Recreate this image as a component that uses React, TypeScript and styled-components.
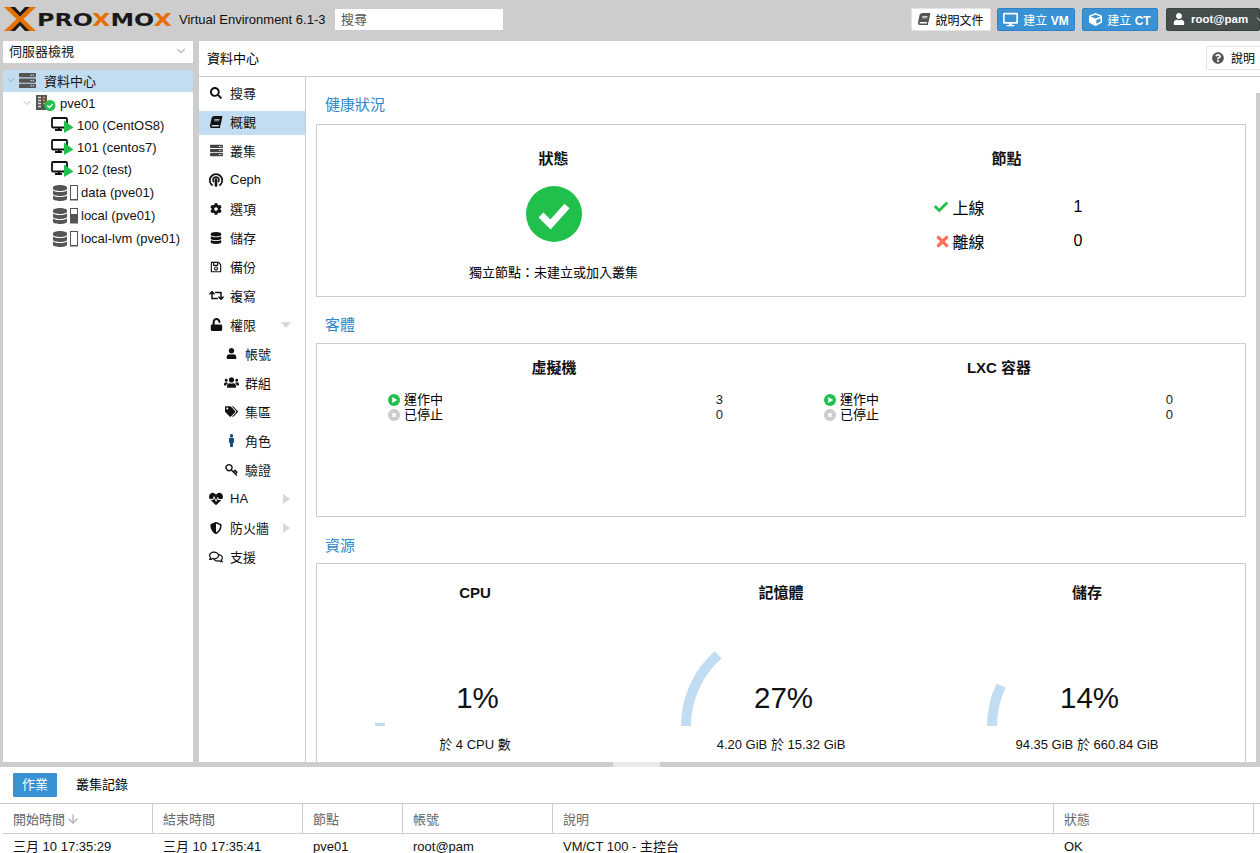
import React from 'react';
import styled, { createGlobalStyle } from 'styled-components';
import {
  FaBook,
  FaCheck,
  FaCog,
  FaCube,
  FaDatabase,
  FaDesktop,
  FaHeartbeat,
  FaMale,
  FaQuestionCircle,
  FaRegComments,
  FaRegSave,
  FaRetweet,
  FaSearch,
  FaServer,
  FaShieldAlt,
  FaTags,
  FaTimes,
  FaUnlock,
  FaUser,
  FaUsers,
} from 'react-icons/fa';
import { FiArrowDown, FiChevronDown, FiKey } from 'react-icons/fi';

const GlobalStyle = createGlobalStyle`
  html, body {
    margin: 0;
    padding: 0;
    background: #cdcdcd;
  }
  body {
    font-family: "Liberation Sans", "Noto Sans CJK TC", sans-serif;
    font-size: 13px;
    color: #000;
  }
`;

const Page = styled.div`
  width: 1260px;
  height: 853px;
  display: flex;
  flex-direction: column;
  overflow: hidden;
  background: #cdcdcd;
`;

const TopBar = styled.header`
  height: 41px;
  flex: none;
  display: flex;
  align-items: center;
  padding: 0 0 3px 4px;
  box-sizing: border-box;
`;

const Logo = styled.div`
  display: flex;
  align-items: center;
  width: 175px;
  flex: none;
`;

const LogoText = styled.span`
  font-family: "DejaVu Sans", sans-serif;
  font-weight: 700;
  font-size: 18px;
  color: #1a1a1a;
  margin-left: 1px;
  white-space: nowrap;
  transform: scaleX(1.32);
  transform-origin: left center;
`;

const LogoX = styled.span`
  color: #e57000;
`;

const Version = styled.span`
  color: #111;
  white-space: nowrap;
  width: 156px;
  flex: none;
`;

const SearchInput = styled.input`
  width: 168px;
  height: 21px;
  border: 0;
  padding: 0 6px;
  box-sizing: border-box;
  font: inherit;
  background: #fff;
  &::placeholder {
    color: #555;
  }
`;

const TopActions = styled.div`
  margin-left: auto;
  display: flex;
  align-items: center;
  gap: 6px;
`;

const TopButton = styled.button<{ $tone: 'plain' | 'blue' | 'dark'; $width: number; $offset?: number }>`
  width: ${(p) => p.$width}px;
  height: 23px;
  margin-left: ${(p) => p.$offset ?? 0}px;
  display: flex;
  align-items: center;
  justify-content: ${(p) => (p.$tone === 'dark' ? 'flex-start' : 'center')};
  gap: ${(p) => (p.$tone === 'dark' ? 6 : 5)}px;
  padding: ${(p) => (p.$tone === 'dark' ? '0 0 0 6px' : '0')};
  border-radius: 2px;
  font: inherit;
  font-size: 12px;
  white-space: nowrap;
  border: 1px solid
    ${(p) => (p.$tone === 'blue' ? '#2f82c4' : p.$tone === 'dark' ? '#3c4242' : '#e4e4e4')};
  background: ${(p) => (p.$tone === 'blue' ? '#3892d4' : p.$tone === 'dark' ? '#464d4d' : '#fff')};
  color: ${(p) => (p.$tone === 'plain' ? '#000' : '#fff')};
  svg {
    flex: none;
  }
`;

const ButtonStrong = styled.b`
  font-weight: 700;
`;

const UserName = styled.span`
  font-size: 11.5px;
  font-weight: 700;
`;

const PlainIcon = styled.span`
  color: #555;
  display: flex;
`;

const Main = styled.div`
  height: 721px;
  flex: none;
  display: flex;
  gap: 6px;
  padding-left: 3px;
`;

const LeftColumn = styled.aside`
  width: 190px;
  flex: none;
  display: flex;
  flex-direction: column;
  gap: 7px;
`;

const ViewSelect = styled.div`
  height: 22px;
  flex: none;
  box-sizing: border-box;
  background: #fff;
  display: flex;
  align-items: center;
  justify-content: space-between;
  padding: 0 5px 3px 6px;
  color: #111;
  svg {
    color: #bbb;
  }
`;

const Tree = styled.div`
  flex: 1;
  background: #fff;
`;

const TreeRow = styled.div<{ $depth: number; $selected?: boolean; $tall?: boolean }>`
  height: ${(p) => (p.$tall ? 23 : 22)}px;
  box-sizing: border-box;
  padding-top: ${(p) => (p.$tall ? 2 : 0)}px;
  padding-bottom: ${(p) => (p.$selected ? 2 : 0)}px;
  display: flex;
  align-items: center;
  padding-left: ${(p) => p.$depth}px;
  background: ${(p) => (p.$selected ? '#c2ddf2' : 'transparent')};
  white-space: nowrap;
  color: #111;
`;

const Twist = styled.span<{ $selected?: boolean }>`
  width: 14px;
  flex: none;
  display: flex;
  color: ${(p) => (p.$selected ? '#9aa' : '#bbb')};
`;

const TreeIcon = styled.span`
  display: flex;
  align-items: center;
  margin-right: 2px;
  flex: none;
`;

const StorageGlyph = styled.span`
  display: flex;
  align-items: center;
  gap: 2px;
`;

const DatacenterLabel = styled.span`
  margin-left: 6px;
`;

const Workspace = styled.main`
  flex: 1;
  min-width: 0;
  display: flex;
  flex-direction: column;
  background: #fff;
`;

const WorkspaceHeader = styled.div`
  height: 36px;
  flex: none;
  box-sizing: border-box;
  border-bottom: 1px solid #cdcdcd;
  display: flex;
  align-items: center;
  justify-content: space-between;
  padding: 0 0 2px 8px;
`;

const HelpButton = styled.button`
  width: 54px;
  height: 24px;
  padding: 0 0 0 5px;
  display: flex;
  align-items: center;
  gap: 7px;
  font: inherit;
  font-size: 12px;
  color: #000;
  background: #fff;
  border: 1px solid #e4e4e4;
  border-right: 0;
  border-radius: 2px 0 0 2px;
  svg {
    color: #555;
  }
`;

const WorkspaceBody = styled.div`
  flex: 1;
  min-height: 0;
  display: flex;
`;

const Nav = styled.nav`
  width: 107px;
  flex: none;
  box-sizing: border-box;
  border-right: 1px solid #cdcdcd;
  padding-top: 5px;
`;

const NavItem = styled.div<{ $selected?: boolean; $sub?: boolean }>`
  height: 24px;
  box-sizing: border-box;
  margin-bottom: 5px;
  display: flex;
  align-items: center;
  padding: 0 0 3px ${(p) => (p.$sub ? 24 : 9)}px;
  background: ${(p) => (p.$selected ? '#c2ddf2' : 'transparent')};
  white-space: nowrap;
  color: #111;
`;

const NavIcon = styled.span`
  width: 16px;
  flex: none;
  display: flex;
  justify-content: center;
  margin-right: 6px;
  color: #111;
`;

const NavArrow = styled.span<{ $open?: boolean }>`
  margin-left: auto;
  margin-right: ${(p) => (p.$open ? 14 : 15)}px;
  width: 0;
  height: 0;
  border-style: solid;
  ${(p) =>
    p.$open
      ? 'border-width: 6px 5px 0 5px; border-color: #d8d8d8 transparent transparent transparent;'
      : 'border-width: 5px 0 5px 7px; border-color: transparent transparent transparent #d8d8d8;'}
`;

const Content = styled.div`
  flex: 1;
  min-width: 0;
  overflow: hidden;
  padding: 0 10px;
`;

const SectionTitle = styled.h2<{ $top: number }>`
  margin: 0;
  height: 47px;
  box-sizing: border-box;
  padding: ${(p) => p.$top}px 0 0 9px;
  font-size: 15px;
  line-height: 18px;
  font-weight: 400;
  color: #2f86c7;
`;

const Panel = styled.section<{ $height: number }>`
  height: ${(p) => p.$height}px;
  box-sizing: border-box;
  border: 1px solid #cdcdcd;
  padding: 0 10px;
  margin-bottom: -1px;
`;

const HealthGrid = styled.div`
  display: grid;
  grid-template-columns: 453px 453px;
`;

const GuestGrid = styled.div`
  display: grid;
  grid-template-columns: 454px 436px;
`;

const Cell = styled.div`
  text-align: center;
`;

const PanelHeading = styled.h3<{ $top: number }>`
  margin: 0;
  padding-top: ${(p) => p.$top}px;
  font-size: 15px;
  line-height: 18px;
  font-weight: 700;
  text-align: center;
  color: #111;
`;

const StatusBadge = styled.div`
  display: flex;
  justify-content: center;
  margin-top: 18px;
`;

const StatusText = styled.div`
  margin-top: 22px;
  line-height: 18px;
`;

const NodeList = styled.div`
  width: 170px;
  margin: 27px auto 0 calc(50% - 73px);
  display: flex;
  flex-direction: column;
  gap: 12px;
`;

const NodeRow = styled.div`
  height: 22px;
  display: grid;
  grid-template-columns: 19px 121px 1fr;
  align-items: center;
  font-size: 16px;
  text-align: left;
`;

const NodeMark = styled.span<{ $ok: boolean }>`
  display: flex;
  color: ${(p) => (p.$ok ? '#21bf4b' : '#ff6c59')};
`;

const GuestRows = styled.div<{ $width: number; $left: number }>`
  width: ${(p) => p.$width}px;
  margin: 15px 0 0 ${(p) => p.$left}px;
`;

const GuestRow = styled.div`
  height: 15px;
  display: flex;
  align-items: center;
  line-height: 15px;
  gap: 4px;
`;

const GuestValue = styled.span`
  margin-left: auto;
  color: #222;
`;

const ResourceGrid = styled.div`
  display: grid;
  grid-template-columns: repeat(3, 1fr);
  margin: 0 -5px;
`;

const GaugeBox = styled.div`
  position: relative;
  width: 200px;
  height: 100px;
  margin: 24px auto 0;
`;

const GaugeValue = styled.div`
  position: absolute;
  left: 5px;
  right: 0;
  top: 55px;
  text-align: center;
  font-size: 29.5px;
  line-height: 34px;
  color: #111;
`;

const GaugeLabel = styled.div`
  margin-top: 11px;
  line-height: 16px;
  color: #111;
`;

const ScrollTrack = styled.div`
  width: 4px;
  flex: none;
  padding-top: 16px;
  display: flex;
`;

const ScrollThumb = styled.div`
  flex: 1;
  background: #cdcdcd;
`;

const Splitter = styled.div`
  height: 5px;
  flex: none;
  position: relative;
`;

const SplitterHandle = styled.div`
  position: absolute;
  left: 613px;
  top: 0;
  width: 47px;
  height: 5px;
  background: #e9e9e9;
`;

const Bottom = styled.section`
  flex: 1;
  min-height: 0;
  background: #fff;
  overflow: hidden;
`;

const TabBar = styled.div`
  height: 37px;
  padding: 6px 0 0 13px;
  box-sizing: border-box;
  display: flex;
  gap: 19px;
  border-bottom: 1px solid #cdcdcd;
`;

const Tab = styled.div<{ $active?: boolean }>`
  height: 24px;
  line-height: 24px;
  padding: ${(p) => (p.$active ? '0 9px' : '0')};
  border-radius: 1px;
  background: ${(p) => (p.$active ? '#3892d4' : 'transparent')};
  color: ${(p) => (p.$active ? '#fff' : '#000')};
`;

const columns = '150px 150px 100px 150px 501px 200px';

const HeaderRow = styled.div`
  display: grid;
  grid-template-columns: ${columns};
  margin-left: 3px;
  height: 30px;
  box-sizing: border-box;
  border-bottom: 1px solid #cdcdcd;
`;

const HeaderCell = styled.div`
  display: flex;
  align-items: center;
  gap: 1px;
  padding-left: 10px;
  color: #666;
  border-right: 1px solid #cdcdcd;
  white-space: nowrap;
  svg {
    color: #aaa;
  }
`;

const DataRow = styled.div`
  display: grid;
  grid-template-columns: ${columns};
  margin-left: 3px;
  padding-top: 5px;
  line-height: 16px;
`;

const DataCell = styled.div`
  padding-left: 10px;
  white-space: nowrap;
  color: #111;
`;

const XMark = () => (
  <svg width="32" height="26" viewBox="0 0 32 26">
    <path d="M0 1h7l9 9.5L25 1h7L19.5 13 32 25h-7l-9-9.5L7 25H0l12.5-12z" fill="#e57000" />
    <path d="M6.5 1H11l5 5.5L21 1h4.5L16 10.5zM6.5 25H11l5-5.5 5 5.5h4.5L16 15.5z" fill="#1a1a1a" />
  </svg>
);

const VmIcon = () => (
  <svg width="24" height="16" viewBox="0 0 24 16">
    <rect x="1" y="1" width="15" height="9.5" rx="1" fill="#fff" stroke="#111" strokeWidth="1.8" />
    <path d="M4 13h7M8 11v2" stroke="#111" strokeWidth="2.2" />
    <path d="M13 3.5 22.5 10.5 13 16z" fill="#21bf4b" />
  </svg>
);

const NodeIcon = () => (
  <svg width="23" height="18" viewBox="0 0 23 18">
    <rect x="1" y="1" width="11" height="15" fill="#555" />
    <path d="M3 3.5h3M3 6.5h3M3 9.5h3M3 12.5h3" stroke="#ddd" strokeWidth="1.4" />
    <path d="M8 3.5h2M8 6.5h2M8 9.5h2" stroke="#e0a030" strokeWidth="1.4" />
    <circle cx="15" cy="11.5" r="5.5" fill="#21bf4b" />
    <path d="M12.4 11.5l2 2 3.4-3.6" stroke="#fff" strokeWidth="1.5" fill="none" />
  </svg>
);

const StorageIcon = ({ fill }: { fill: number }) => (
  <StorageGlyph>
    <FaDatabase size={16} color="#555" />
    <svg width="9" height="16" viewBox="0 0 9 16">
      <rect x="0.5" y="0.5" width="7" height="14.5" fill="#fff" stroke="#555" />
      <rect x="1" y={15 - fill} width="6" height={fill} fill="#555" />
    </svg>
  </StorageGlyph>
);

const RunIcon = () => (
  <svg width="12" height="12" viewBox="0 0 12 12">
    <circle cx="6" cy="6" r="6" fill="#21bf4b" />
    <path d="M4.2 2.9 9.2 6 4.2 9.1z" fill="#fff" />
  </svg>
);

const StopIcon = () => (
  <svg width="12" height="12" viewBox="0 0 12 12">
    <circle cx="6" cy="6" r="6" fill="#cdcdcd" />
    <rect x="4" y="4" width="4" height="4" fill="#f4f4f4" />
  </svg>
);

const CephIcon = () => (
  <svg width="14" height="15" viewBox="0 0 14 15" fill="none" stroke="#111">
    <path d="M3.6 13.6a6.2 6.2 0 1 1 6.8 0" strokeWidth="1.8" />
    <path d="M5 10.2a3 3 0 1 1 4 0" strokeWidth="1.6" />
    <path d="M7 7.5v6" strokeWidth="2.6" strokeLinecap="round" />
  </svg>
);

const Gauge = ({ percent, label }: { percent: number; label: string }) => {
  const angle = (percent / 100) * Math.PI;
  const x = 100 - 95 * Math.cos(angle);
  const y = 100 - 95 * Math.sin(angle);
  return (
    <>
      <GaugeBox>
        <svg width="200" height="100" viewBox="0 0 200 100">
          <path d={`M5 100A95 95 0 0 1 ${x} ${y}`} fill="none" stroke="#c2ddf2" strokeWidth="10" />
        </svg>
        <GaugeValue>{percent}%</GaugeValue>
      </GaugeBox>
      <GaugeLabel>{label}</GaugeLabel>
    </>
  );
};

const navItems: { label: string; icon: React.ReactNode; selected?: boolean; sub?: boolean; arrow?: 'open' | 'closed' }[] = [
  { label: '搜尋', icon: <FaSearch size={12} /> },
  { label: '概觀', icon: <FaBook size={12} style={{ transform: 'skewX(-12deg)' }} />, selected: true },
  { label: '叢集', icon: <FaServer size={13} color="#444" /> },
  { label: 'Ceph', icon: <CephIcon /> },
  { label: '選項', icon: <FaCog size={12} /> },
  { label: '儲存', icon: <FaDatabase size={12} /> },
  { label: '備份', icon: <FaRegSave size={12} /> },
  { label: '複寫', icon: <FaRetweet size={15} /> },
  { label: '權限', icon: <FaUnlock size={13} />, arrow: 'open' },
  { label: '帳號', icon: <FaUser size={11} />, sub: true },
  { label: '群組', icon: <FaUsers size={15} />, sub: true },
  { label: '集區', icon: <FaTags size={13} />, sub: true },
  { label: '角色', icon: <FaMale size={13} color="#0f4a78" />, sub: true },
  { label: '驗證', icon: <FiKey size={13} strokeWidth={2.6} style={{ transform: 'scaleY(-1)' }} />, sub: true },
  { label: 'HA', icon: <FaHeartbeat size={14} />, arrow: 'closed' },
  { label: '防火牆', icon: <FaShieldAlt size={12} />, arrow: 'closed' },
  { label: '支援', icon: <FaRegComments size={14} /> },
];

const tableHeads = ['開始時間', '結束時間', '節點', '帳號', '說明', '狀態'];
const tableRow = ['三月 10 17:35:29', '三月 10 17:35:41', 'pve01', 'root@pam', 'VM/CT 100 - 主控台', 'OK'];

export default function App() {
  return (
    <Page>
      <GlobalStyle />
      <TopBar>
        <Logo>
          <XMark />
          <LogoText>
            PRO<LogoX>X</LogoX>MO<LogoX>X</LogoX>
          </LogoText>
        </Logo>
        <Version>Virtual Environment 6.1-3</Version>
        <SearchInput placeholder="搜尋" />
        <TopActions>
          <TopButton $tone="plain" $width={80}>
            <PlainIcon>
              <FaBook size={12} style={{ transform: 'skewX(-12deg)' }} />
            </PlainIcon>
            說明文件
          </TopButton>
          <TopButton $tone="blue" $width={78}>
            <FaDesktop size={15} />
            <span>
              建立 <ButtonStrong>VM</ButtonStrong>
            </span>
          </TopButton>
          <TopButton $tone="blue" $width={76} $offset={1}>
            <FaCube size={13} />
            <span>
              建立 <ButtonStrong>CT</ButtonStrong>
            </span>
          </TopButton>
          <TopButton $tone="dark" $width={94} $offset={2}>
            <FaUser size={12} />
            <UserName>root@pam</UserName>
            <FiChevronDown size={13} color="#aaa" />
          </TopButton>
        </TopActions>
      </TopBar>

      <Main>
        <LeftColumn>
          <ViewSelect>
            伺服器檢視
            <FiChevronDown size={14} />
          </ViewSelect>
          <Tree>
            <TreeRow $depth={2} $selected>
              <Twist $selected>
                <FiChevronDown size={12} />
              </Twist>
              <TreeIcon>
                <FaServer size={17} color="#555" />
              </TreeIcon>
              <DatacenterLabel>資料中心</DatacenterLabel>
            </TreeRow>
            <TreeRow $depth={18}>
              <Twist>
                <FiChevronDown size={12} />
              </Twist>
              <TreeIcon>
                <NodeIcon />
              </TreeIcon>
              pve01
            </TreeRow>
            <TreeRow $depth={48}>
              <TreeIcon>
                <VmIcon />
              </TreeIcon>
              100 (CentOS8)
            </TreeRow>
            <TreeRow $depth={48}>
              <TreeIcon>
                <VmIcon />
              </TreeIcon>
              101 (centos7)
            </TreeRow>
            <TreeRow $depth={48}>
              <TreeIcon>
                <VmIcon />
              </TreeIcon>
              102 (test)
            </TreeRow>
            <TreeRow $depth={49} $tall>
              <TreeIcon>
                <StorageIcon fill={1} />
              </TreeIcon>
              data (pve01)
            </TreeRow>
            <TreeRow $depth={49} $tall>
              <TreeIcon>
                <StorageIcon fill={9} />
              </TreeIcon>
              local (pve01)
            </TreeRow>
            <TreeRow $depth={49} $tall>
              <TreeIcon>
                <StorageIcon fill={1} />
              </TreeIcon>
              local-lvm (pve01)
            </TreeRow>
          </Tree>
        </LeftColumn>

        <Workspace>
          <WorkspaceHeader>
            資料中心
            <HelpButton>
              <FaQuestionCircle size={12} />
              說明
            </HelpButton>
          </WorkspaceHeader>
          <WorkspaceBody>
            <Nav>
              {navItems.map((item) => (
                <NavItem key={item.label} $selected={item.selected} $sub={item.sub}>
                  <NavIcon>{item.icon}</NavIcon>
                  {item.label}
                  {item.arrow && <NavArrow $open={item.arrow === 'open'} />}
                </NavItem>
              ))}
            </Nav>
            <Content>
              <SectionTitle $top={19}>健康狀況</SectionTitle>
              <Panel $height={173}>
                <HealthGrid>
                  <Cell>
                    <PanelHeading $top={25}>狀態</PanelHeading>
                    <StatusBadge>
                      <svg width="56" height="56" viewBox="0 0 56 56">
                        <circle cx="28" cy="28" r="28" fill="#21bf4b" />
                        <path d="M15 29l9.5 9.5L41 20" fill="none" stroke="#fff" strokeWidth="7" />
                      </svg>
                    </StatusBadge>
                    <StatusText>獨立節點：未建立或加入叢集</StatusText>
                  </Cell>
                  <Cell>
                    <PanelHeading $top={25}>節點</PanelHeading>
                    <NodeList>
                      <NodeRow>
                        <NodeMark $ok>
                          <FaCheck size={14} />
                        </NodeMark>
                        上線
                        <span>1</span>
                      </NodeRow>
                      <NodeRow>
                        <NodeMark $ok={false}>
                          <FaTimes size={17} />
                        </NodeMark>
                        離線
                        <span>0</span>
                      </NodeRow>
                    </NodeList>
                  </Cell>
                </HealthGrid>
              </Panel>

              <SectionTitle $top={20}>客體</SectionTitle>
              <Panel $height={174}>
                <GuestGrid>
                  <Cell>
                    <PanelHeading $top={15}>虛擬機</PanelHeading>
                    <GuestRows $width={335} $left={61}>
                      <GuestRow>
                        <RunIcon />
                        運作中
                        <GuestValue>3</GuestValue>
                      </GuestRow>
                      <GuestRow>
                        <StopIcon />
                        已停止
                        <GuestValue>0</GuestValue>
                      </GuestRow>
                    </GuestRows>
                  </Cell>
                  <Cell>
                    <PanelHeading $top={15}>LXC 容器</PanelHeading>
                    <GuestRows $width={349} $left={43}>
                      <GuestRow>
                        <RunIcon />
                        運作中
                        <GuestValue>0</GuestValue>
                      </GuestRow>
                      <GuestRow>
                        <StopIcon />
                        已停止
                        <GuestValue>0</GuestValue>
                      </GuestRow>
                    </GuestRows>
                  </Cell>
                </GuestGrid>
              </Panel>

              <SectionTitle $top={21}>資源</SectionTitle>
              <Panel $height={260}>
                <ResourceGrid>
                  <Cell>
                    <PanelHeading $top={20}>CPU</PanelHeading>
                    <Gauge percent={1} label="於 4 CPU 數" />
                  </Cell>
                  <Cell>
                    <PanelHeading $top={20}>記憶體</PanelHeading>
                    <Gauge percent={27} label="4.20 GiB 於 15.32 GiB" />
                  </Cell>
                  <Cell>
                    <PanelHeading $top={20}>儲存</PanelHeading>
                    <Gauge percent={14} label="94.35 GiB 於 660.84 GiB" />
                  </Cell>
                </ResourceGrid>
              </Panel>
            </Content>
            <ScrollTrack>
              <ScrollThumb />
            </ScrollTrack>
          </WorkspaceBody>
        </Workspace>
      </Main>

      <Splitter>
        <SplitterHandle />
      </Splitter>

      <Bottom>
        <TabBar>
          <Tab $active>作業</Tab>
          <Tab>叢集記錄</Tab>
        </TabBar>
        <HeaderRow>
          {tableHeads.map((head, i) => (
            <HeaderCell key={head}>
              {head}
              {i === 0 && <FiArrowDown size={14} />}
            </HeaderCell>
          ))}
        </HeaderRow>
        <DataRow>
          {tableRow.map((cell) => (
            <DataCell key={cell}>{cell}</DataCell>
          ))}
        </DataRow>
      </Bottom>
    </Page>
  );
}
